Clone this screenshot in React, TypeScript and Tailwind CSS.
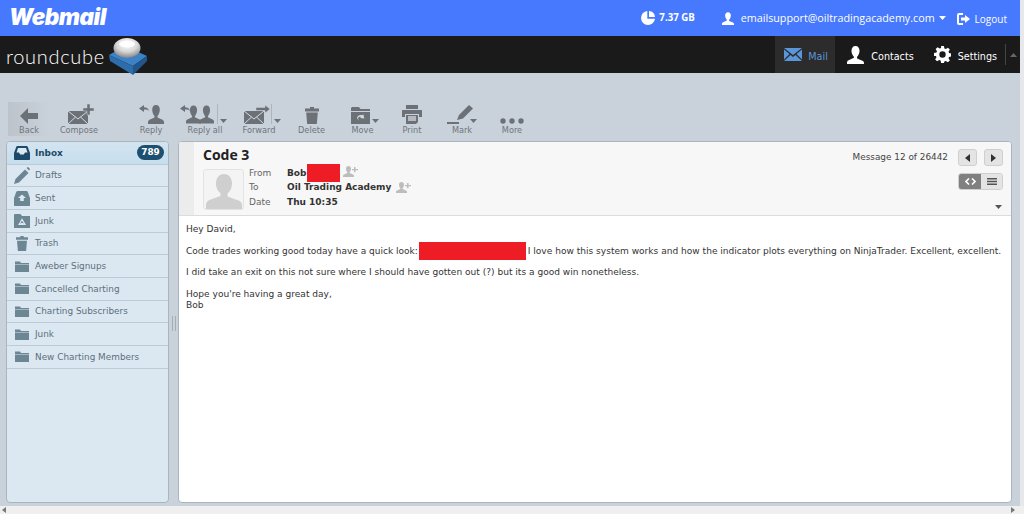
import type { ReactNode } from "react";

const GRAY = "#6b7177";
const FOLDER = "#6d8694";

function Caret({ color = GRAY, up = false }: { color?: string; up?: boolean }) {
  return (
    <svg width="7" height="4" viewBox="0 0 7 4">
      <path d={up ? "M0 4 3.5 0 7 4z" : "M0 0h7L3.5 4z"} fill={color} />
    </svg>
  );
}

function BackIcon() {
  return (
    <svg width="18" height="16" viewBox="0 0 18 16">
      <path d="M0 8 8 0v5h10v6H8v5z" fill={GRAY} />
    </svg>
  );
}

function Envelope({ y = 7 }: { y?: number }) {
  return (
    <g transform={`translate(0 ${y})`}>
      <path d="M0 0h20v13H0z" fill={GRAY} />
      <path d="M0 0 10 8 20 0M0 13 7.500 6M20 13 12.500 6" fill="none" stroke="#d3d9df" strokeWidth="1" />
    </g>
  );
}

function ComposeIcon() {
  return (
    <svg width="27" height="20" viewBox="0 0 27 20">
      <Envelope />
      <path d="M19 0h3v4h4v3h-4v4h-3V7h-4V4h4z" fill={GRAY} stroke="#c9d1da" strokeWidth=".5" />
    </svg>
  );
}

function Person({ x = 0, w = 16, h = 19 }: { x?: number; w?: number; h?: number }) {
  return (
    <svg x={x} width={w} height={h} viewBox="0 0 16 19">
      <path d="M8 0c2.500 0 3.800 2 3.800 4.700 0 2.800-1.200 5.300-2.300 6.300v1.500l5 2.200c.8.400 1.500 1.300 1.500 2.300v2H0v-2c0-1 .7-1.900 1.500-2.300l5-2.200V11C5.400 10 4.200 7.500 4.200 4.700 4.200 2 5.500 0 8 0z" fill={GRAY} />
    </svg>
  );
}

function ReplyIcon() {
  return (
    <svg width="25" height="19" viewBox="0 0 25 19">
      <path d="M0 3.500 5 0v2.200c2.500 0 4.200 1 5 3.800-1.200-1.300-2.800-1.700-5-1.500V7z" fill={GRAY} />
      <Person x={9} />
    </svg>
  );
}

function ReplyAllIcon() {
  return (
    <svg width="34" height="19" viewBox="0 0 34 19">
      <path d="M0 3.500 5 0v2.200c2.500 0 4.200 1 5 3.800-1.200-1.300-2.800-1.700-5-1.500V7z" fill={GRAY} />
      <Person x={6} w={15} />
      <Person x={19} w={15} />
    </svg>
  );
}

function ForwardIcon() {
  return (
    <svg width="26" height="19" viewBox="0 0 26 19">
      <Envelope y={6} />
      <path d="M12 2.500h9V0l5 4-5 4V5.500h-9z" fill={GRAY} stroke="#c9d1da" strokeWidth=".5" />
    </svg>
  );
}

function TrashIcon({ color = GRAY, size = 14 }: { color?: string; size?: number }) {
  return (
    <svg width={size} height={size * 1.25} viewBox="0 0 14 17.500">
      <path d="M5 0h4v1.500h5v3H0v-3h5zM1.200 5.500h11.600l-1 12H2.200z" fill={color} />
    </svg>
  );
}

function MoveIcon() {
  return (
    <svg width="19" height="17" viewBox="0 0 19 17">
      <path d="M1 0h7l1.500 2H19v2H0V1z" fill={GRAY} />
      <path d="M0 5h19v12H0z" fill={GRAY} />
      <path d="M6 11c.5-2.500 3-3.700 5.300-2.800l1-1 1 4.300-4.300-.6 1-1c-1.300-.5-2.600 0-3 1.600l.8 2.200z" fill="#d5dae0" />
    </svg>
  );
}

function PrintIcon() {
  return (
    <svg width="20" height="19" viewBox="0 0 20 19">
      <path d="M4 0h12v4H4zM1 5h18c.6 0 1 .4 1 1v6h-3V9H3v3H0V6c0-.6.4-1 1-1z" fill={GRAY} />
      <path d="M4 10h12v7l-2 2H4z" fill={GRAY} />
      <path d="M6 11h8v5H6z" fill="#d5dae0" opacity=".7" />
    </svg>
  );
}

function MarkIcon() {
  return (
    <svg width="27" height="19" viewBox="0 0 27 19">
      <path d="M0 17h12v2H0z" fill={GRAY} />
      <path d="M10 15l2-5L22 0l4 3.500-10 10z" fill={GRAY} />
    </svg>
  );
}

function MoreIcon() {
  return (
    <svg width="24" height="6" viewBox="0 0 24 6">
      <circle cx="3" cy="3" r="2.700" fill={GRAY} />
      <circle cx="12" cy="3" r="2.700" fill={GRAY} />
      <circle cx="21" cy="3" r="2.700" fill={GRAY} />
    </svg>
  );
}

function InboxIcon() {
  return (
    <svg width="16" height="14" viewBox="0 0 16 14">
      <path d="M3.500 0h9c.6 0 1 .3 1.200.8L16 7v6c0 .6-.4 1-1 1H1c-.6 0-1-.4-1-1V7L2.300.8C2.500.3 3 0 3.500 0z" fill="#1d4a68" />
      <path d="M4 2h8l1.500 4.500H11L9.800 8.500H6.200L5 6.500H2.500z" fill="#dbe9f3" />
    </svg>
  );
}

function PencilIcon() {
  return (
    <svg width="16" height="17" viewBox="0 0 16 17">
      <path d="M0 17l1.500-5L11 2.500l3.500 3.500L5 15.500z" fill={FOLDER} />
      <path d="M13 .5c.5-.5 1.200-.5 1.700 0l.8.800c.5.500.5 1.200 0 1.700l-.5.500L12.500 1z" fill={FOLDER} />
    </svg>
  );
}

function SentIcon() {
  return (
    <svg width="16" height="15" viewBox="0 0 16 15">
      <path d="M3.500 0h9c.6 0 1 .3 1.200.8L16 7v7c0 .6-.4 1-1 1H1c-.6 0-1-.4-1-1V7L2.300.8C2.500.3 3 0 3.500 0z" fill={FOLDER} />
      <path d="M8 3.500l4 3.500H9.800v3H6.200V7H4z" fill="#dbe9f3" />
    </svg>
  );
}

function JunkIcon() {
  return (
    <svg width="16" height="14" viewBox="0 0 16 14">
      <path d="M.5 0h6L8 2h8v12H0V1z" fill={FOLDER} />
      <path d="M5 10.500 8 5.500l3 5zM6.500 9.500h3" fill="none" stroke="#dbe9f3" strokeWidth="1.200" />
    </svg>
  );
}

function FolderIcon() {
  return (
    <svg width="14" height="11" viewBox="0 0 14 11">
      <path d="M0 .5h5L6 2h8v1H0zM0 3.500h14V11H0z" fill={FOLDER} />
    </svg>
  );
}

function AddContact() {
  return (
    <svg width="15" height="11" viewBox="0 0 15 11">
      <path d="M5.500 0C7 0 8 1 8 2.800 8 4.300 7.300 5.500 6.700 6v1l3.300 1.500c.6.300 1 .8 1 1.500v1H0v-1c0-.7.400-1.200 1-1.500L4.300 7V6C3.700 5.500 3 4.300 3 2.800 3 1 4 0 5.500 0z" fill="#bdbdbd" />
      <path d="M11 1h1.500v2H15v1.300h-2.500v2H11v-2H9V3h2z" fill="#bdbdbd" />
    </svg>
  );
}

function Cube() {
  return (
    <svg width="40" height="37" viewBox="0 0 40 37" className="-mb-[2px] shrink-0">
      <defs>
        <radialGradient id="ball" cx="50%" cy="30%" r="70%">
          <stop offset="0%" stopColor="#ffffff" />
          <stop offset="55%" stopColor="#d8d8d8" />
          <stop offset="100%" stopColor="#858585" />
        </radialGradient>
      </defs>
      <path d="M1 17 17 8 39 18 25 28z" fill="#3c82c4" />
      <path d="M1 17 25 28V37L2 23z" fill="#2d6dab" />
      <path d="M25 28 39 18V23L25 37z" fill="#22558b" />
      <ellipse cx="19" cy="10" rx="13.500" ry="10" fill="url(#ball)" />
      <ellipse cx="19" cy="6" rx="8" ry="3.500" fill="#fff" opacity=".9" />
    </svg>
  );
}

type ToolItem = {
  label: string;
  width: string;
  icon: ReactNode;
  iconClass?: string;
  caretClass?: string;
  divider?: string;
};

const toolbarItems: ToolItem[] = [
  { label: "Reply", width: "w-[52px]", icon: <ReplyIcon /> },
  { label: "Reply all", width: "w-[56px]", icon: <ReplyAllIcon />, iconClass: "mr-[16px]", caretClass: "-right-[13px]", divider: "-right-[4px]" },
  { label: "Forward", width: "w-[52px]", icon: <ForwardIcon />, iconClass: "mr-[4px]", caretClass: "-right-[11px]", divider: "-right-[2px]" },
  { label: "Delete", width: "w-[53px]", icon: <TrashIcon /> },
  { label: "Move", width: "w-[49px]", icon: <MoveIcon />, iconClass: "mr-[5px]", caretClass: "-right-[9px]" },
  { label: "Print", width: "w-[50px]", icon: <PrintIcon /> },
  { label: "Mark", width: "w-[50px]", icon: <MarkIcon />, iconClass: "mr-[4px]", caretClass: "-right-[3px]" },
  { label: "More", width: "w-[50px]", icon: <MoreIcon /> },
];

const folders: { name: string; icon: ReactNode }[] = [
  { name: "Drafts", icon: <PencilIcon /> },
  { name: "Sent", icon: <SentIcon /> },
  { name: "Junk", icon: <JunkIcon /> },
  { name: "Trash", icon: <TrashIcon color={FOLDER} size={12} /> },
  { name: "Aweber Signups", icon: <FolderIcon /> },
  { name: "Cancelled Charting", icon: <FolderIcon /> },
  { name: "Charting Subscribers", icon: <FolderIcon /> },
  { name: "Junk", icon: <FolderIcon /> },
  { name: "New Charting Members", icon: <FolderIcon /> },
];

function ToolButton({ label, width, icon, iconClass = "", caretClass, divider }: ToolItem) {
  return (
    <div className={`flex h-[34px] flex-col items-center justify-end ${width}`}>
      <div className={`relative flex h-[22px] items-end ${iconClass}`}>
        {icon}
        {divider && <span className={`absolute bottom-0 h-[20px] w-px bg-[#aeb5bc] ${divider}`} />}
        {caretClass && (
          <span className={`absolute bottom-[1px] flex ${caretClass}`}>
            <Caret />
          </span>
        )}
      </div>
      <span className="mt-[1px] text-[8.200px] leading-[11px] text-[#6f757b]">{label}</span>
    </div>
  );
}

export default function App() {
  return (
    <div className="flex h-[514px] w-[1024px] flex-col overflow-hidden bg-[#c9d1da] font-['DejaVu_Sans',sans-serif]">
      <div className="flex min-h-0 flex-1">
        <div className="flex w-[1020px] shrink-0 flex-col">
          <header className="flex h-[36px] shrink-0 items-center bg-[#4679fe] pl-[9px] text-white">
            <span className="-mt-[2px] font-['Inter',sans-serif] text-[22.500px] leading-none font-black tracking-[-0.5px] italic">Webmail</span>
            <div className="ml-auto flex items-center font-['Open_Sans',sans-serif]">
              <svg width="14" height="14" viewBox="0 0 14 14">
                <path d="M6.300 0v7.700h7.700A7 7 0 1 1 6.300 0zM8 0a6 6 0 0 1 6 6H8z" fill="#fff" />
              </svg>
              <span className="ml-[4px] text-[9.700px] font-bold">7.37 GB</span>
              <svg className="ml-[27px]" width="12" height="13" viewBox="0 0 16 17">
                <path d="M8 0c2.500 0 3.800 2 3.800 4.500 0 2.500-1.200 4.700-2.300 5.700v1.500l5 2.200c.8.400 1.500 1 1.500 2V17H0v-1.600c0-1 .7-1.600 1.500-2l5-2.200v-1C5.400 9.200 4.200 7 4.200 4.500 4.200 2 5.500 0 8 0z" fill="#fff" />
              </svg>
              <span className="ml-[7px] text-[10.750px]">emailsupport@oiltradingacademy.com</span>
              <span className="ml-[4px] flex">
                <Caret color="#fff" />
              </span>
              <svg className="mt-[2px] ml-[11px]" width="13" height="12" viewBox="0 0 13 12">
                <path d="M6 1H2a1 1 0 0 0-1 1v8a1 1 0 0 0 1 1h4" fill="none" stroke="#fff" strokeWidth="2" />
                <path d="M4 4.500h4V2l5 4-5 4V7.500H4z" fill="#fff" />
              </svg>
              <span className="mr-[13px] ml-[5px] pt-[3px] text-[10px]">Logout</span>
            </div>
          </header>

          <nav className="flex h-[37px] shrink-0 items-stretch bg-[#1a1a1a]">
            <div className="flex items-end pl-[6px]">
              <span className="mb-[7px] w-[102px] font-['Lato',sans-serif] text-[20px] leading-none font-light tracking-[0.7px] text-white">roundcube</span>
              <Cube />
            </div>
            <div className="ml-auto flex items-stretch text-[9.600px]">
              <div className="flex w-[60px] items-center bg-[#2c2c2c] pl-[9px] text-[#5b96d8]">
                <svg width="18" height="13" viewBox="0 0 18 13">
                  <path d="M0 0h18L9 7zM0 1.500 5.500 6 0 11.500zM18 1.500 12.500 6l5.500 5.500zM6.500 7 9 9l2.500-2L18 13H0z" fill="#5b96d8" />
                </svg>
                <span className="ml-[6px] pt-[5px]">Mail</span>
              </div>
              <div className="flex items-center pl-[12px] text-white">
                <svg width="17" height="18" viewBox="0 0 16 17">
                  <path d="M8 0c2.500 0 3.800 2 3.800 4.500 0 2.500-1.200 4.700-2.300 5.700v1.500l5 2.200c.8.400 1.500 1 1.500 2V17H0v-1.600c0-1 .7-1.600 1.500-2l5-2.200v-1C5.400 9.200 4.200 7 4.200 4.500 4.200 2 5.500 0 8 0z" fill="#fff" />
                </svg>
                <span className="ml-[7px] pt-[5px]">Contacts</span>
              </div>
              <div className="flex items-center pl-[20px] text-white">
                <svg width="17" height="17" viewBox="0 0 24 24">
                  <path fillRule="evenodd" d="M10 0h4l.7 3.400 2 .8L19.600 2.300l2.800 2.800-1.900 2.900.8 2 3.400.7v4l-3.400.7-.8 2 1.900 2.900-2.800 2.800-2.900-1.900-2 .8L14 24h-4l-.7-3.400-2-.8-2.900 1.900-2.800-2.800 1.900-2.900-.8-2L0 14v-4l3.400-.7.8-2-1.900-2.900 2.800-2.800 2.900 1.900 2-.8zM12 7.500a4.500 4.500 0 1 0 0 9 4.500 4.500 0 0 0 0-9z" fill="#fff" />
                </svg>
                <span className="ml-[7px] pt-[5px]">Settings</span>
              </div>
              <div className="my-[8px] ml-[8px] w-px bg-[#444]" />
              <div className="flex w-[14px] items-center justify-center">
                <Caret color="#666" up />
              </div>
            </div>
          </nav>

          <div className="flex h-[68px] shrink-0 items-end pb-[5px]">
            <div className="ml-[8px] w-[42px] bg-gradient-to-r from-[#bcc3cb] to-[#c9d1da]">
              <ToolButton label="Back" width="w-[42px]" icon={<BackIcon />} />
            </div>
            <ToolButton label="Compose" width="w-[58px]" icon={<ComposeIcon />} iconClass="ml-[4px]" />
            <div className="w-[17px]" />
            {toolbarItems.map((item) => (
              <ToolButton key={item.label} {...item} />
            ))}
          </div>

          <div className="flex min-h-0 flex-1 pl-[6px]">
            <aside className="h-[362px] w-[163px] shrink-0 overflow-hidden rounded-[4px] border border-[#aab5bf] bg-[#dbe8f2] text-[8.900px]">
              <div className="flex h-[22.670px] items-center border-b border-[#bccbd6] bg-gradient-to-b from-[#d2e4f0] to-[#c6deed] font-bold text-[#1d4a68]">
                <span className="flex w-[28px] justify-center pl-[1px]">
                  <InboxIcon />
                </span>
                <span className="pt-[1px]">Inbox</span>
                <span className="mr-[4px] ml-auto flex h-[15px] w-[27px] items-center justify-center rounded-full bg-[#1f4f70] text-white">789</span>
              </div>
              {folders.map((folder, i) => (
                <div key={`${folder.name}-${i}`} className="flex h-[22.670px] items-center border-b border-[#bccbd6] text-[#5d6f7b]">
                  <span className="flex w-[28px] justify-center pl-[1px]">{folder.icon}</span>
                  <span className="pt-[1px]">{folder.name}</span>
                </div>
              ))}
            </aside>

            <div className="flex w-[9px] shrink-0 items-center justify-center">
              <div className="h-[15px] w-[4px] border-x border-[#a4adb6]" />
            </div>

            <main className="h-[362px] w-[834px] shrink-0 overflow-hidden rounded-[4px] border border-[#aab5bf] bg-white">
              <div className="flex h-[74px] border-b border-[#dcdcdc] bg-[#f7f7f7]">
                <div className="w-[15px] shrink-0 bg-[#ececec]" />
                <div className="flex-1 pt-[4px] pl-[9px]">
                  <div className="font-['Open_Sans',sans-serif] text-[14px] leading-[18px] font-bold text-[#222]">Code 3</div>
                  <div className="mt-[5px] flex">
                    <div className="flex h-[41px] w-[41px] items-end justify-center rounded-[3px] border border-[#e3e3e3] bg-[#f4f4f4]">
                      <svg width="36" height="35" viewBox="0 0 36 35">
                        <path d="M18 0c5 0 8 4 8 9.500 0 4.500-2 8-4.500 10v3l11 4c2 .8 3.500 2.300 3.500 4.500V35H0v-4.500c0-2.200 1.500-3.700 3.500-4.500l11-4v-3C12 17.500 10 14 10 9.500 10 4 13 0 18 0z" fill="#cfcfcf" />
                      </svg>
                    </div>
                    <div className="-mt-[3px] ml-[5px] text-[9px]">
                      <div className="flex h-[14.500px] items-center">
                        <span className="w-[38px] text-[#666]">From</span>
                        <span className="font-bold text-[#333]">Bob</span>
                        <span className="-my-[2px] h-[18px] w-[33px] bg-[#ee1c25]" />
                        <span className="-mt-[3px] ml-[3px] flex">
                          <AddContact />
                        </span>
                      </div>
                      <div className="flex h-[14.500px] items-center">
                        <span className="w-[38px] text-[#666]">To</span>
                        <span className="font-bold text-[#333]">Oil Trading Academy</span>
                        <span className="-mt-[1px] ml-[5px] flex">
                          <AddContact />
                        </span>
                      </div>
                      <div className="flex h-[14.500px] items-center">
                        <span className="w-[38px] text-[#666]">Date</span>
                        <span className="font-bold text-[#333]">Thu 10:35</span>
                      </div>
                    </div>
                  </div>
                </div>
                <div className="flex flex-col items-end pt-[7px] pr-[8px]">
                  <div className="flex items-center">
                    <span className="mr-[10px] text-[8.900px] text-[#444]">Message 12 of 26442</span>
                    <div className="flex h-[17px] w-[19px] items-center justify-center rounded-[3px] border border-[#cfcfcf] bg-[#e4e4e4]">
                      <svg width="5" height="8" viewBox="0 0 5 8"><path d="M5 0v8L0 4z" fill="#333" /></svg>
                    </div>
                    <div className="ml-[7px] flex h-[17px] w-[19px] items-center justify-center rounded-[3px] border border-[#cfcfcf] bg-[#e4e4e4]">
                      <svg width="5" height="8" viewBox="0 0 5 8"><path d="M0 0v8l5-4z" fill="#333" /></svg>
                    </div>
                  </div>
                  <div className="mt-[7px] flex h-[17px] w-[45px] overflow-hidden rounded-[3px] border border-[#cfcfcf]">
                    <div className="flex w-[22px] items-center justify-center bg-[#808080]">
                      <svg width="11" height="7" viewBox="0 0 11 7">
                        <path d="M4 .5 1 3.500l3 3M7 .5l3 3-3 3" fill="none" stroke="#fff" strokeWidth="1.600" />
                      </svg>
                    </div>
                    <div className="flex flex-1 items-center justify-center bg-[#e4e4e4]">
                      <svg width="10" height="7" viewBox="0 0 10 7">
                        <path d="M0 0h10v1.400H0zM0 2.800h10v1.400H0zM0 5.600h10V7H0z" fill="#555" />
                      </svg>
                    </div>
                  </div>
                  <div className="mt-[15px] mr-[1px] flex">
                    <Caret color="#555" />
                  </div>
                </div>
              </div>

              <div className="pt-[8px] pl-[7px] text-[9.060px] leading-[11px] whitespace-nowrap text-[#333]">
                <p>Hey David,</p>
                <p className="mt-[10.500px]">
                  <span className="text-[9px]">Code trades working good today have a quick look:</span>
                  <span className="-my-[4px] mr-[2px] ml-[1px] inline-block h-[18px] w-[107px] bg-[#ee1c25] align-middle" />
                  I love how this system works and how the indicator plots everything on NinjaTrader. Excellent, excellent.
                </p>
                <p className="mt-[10.500px]">I did take an exit on this not sure where I should have gotten out (?) but its a good win nonetheless.</p>
                <p className="mt-[10.500px]">Hope you're having a great day,</p>
                <p>Bob</p>
              </div>
            </main>
          </div>
        </div>
        <div className="w-[4px] shrink-0 bg-[#e6e8eb]" />
      </div>

      <div className="flex h-[8px] shrink-0 items-center justify-between bg-[#efefef] pr-[9px] pl-[2px]">
        <svg width="4" height="6" viewBox="0 0 4 6"><path d="M4 0v6L0 3z" fill="#777" /></svg>
        <svg width="4" height="6" viewBox="0 0 4 6"><path d="M0 0v6l4-3z" fill="#777" /></svg>
      </div>
    </div>
  );
}
